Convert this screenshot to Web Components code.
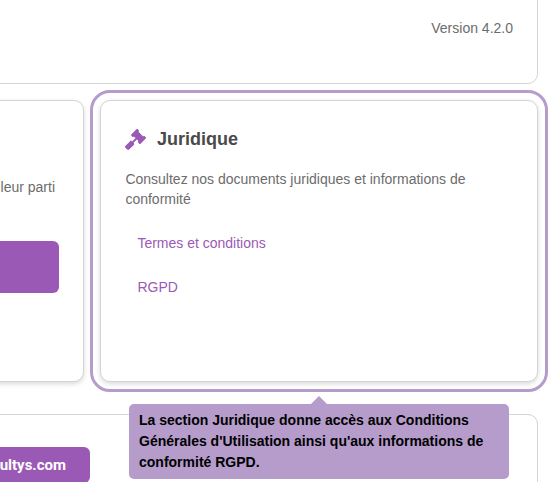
<!DOCTYPE html>
<html lang="fr"><head><meta charset="utf-8"><style>
html,body{margin:0;padding:0;background:#fff;overflow:hidden;width:553px;height:482px}
body{font-family:"Liberation Sans",sans-serif;color:#666}
</style></head><body>
<template id="t-page"><style>
:host{display:flex;flex-direction:column;width:628px;margin-left:-90px;margin-top:-18px}
.row{display:grid;grid-template-columns:174px 438px;gap:16px;margin:16px 0 32px}
</style>
<slot name="top"></slot><div class="row"><slot name="a"></slot><slot name="b"></slot></div><slot name="bottom"></slot></template>

<template id="t-card"><style>
:host{display:block;position:relative;box-sizing:border-box;background:#fff;border:1px solid #d4d4d4;border-radius:10px}
:host([shadow]){box-shadow:0 2px 5px rgba(0,0,0,.15)}
:host([focused]){outline:3px solid #b59ccb;outline-offset:7px}
</style><slot></slot></template>

<template id="t-legal"><style>
:host{display:flex;flex-direction:column;box-sizing:border-box;height:280px;padding:23px 24px 0}
h2{display:flex;align-items:center;gap:11px;margin:0;height:30px;font:700 18px "Liberation Sans",sans-serif;color:#4a4a4a}
svg{width:21px;height:21px;fill:#9b59b6;flex:none}
p{margin:15px 0 0 .4px;font:400 14px/20px "Liberation Sans",sans-serif;color:#6c6c6c}
nav{display:flex;flex-direction:column;margin:12px 0 0 .4px}
</style>
<h2><svg viewBox="0 0 512 512"><path d="M504.971 199.362l-22.627-22.627c-9.373-9.373-24.569-9.373-33.941 0l-5.657 5.657L329.608 69.255l5.657-5.657c9.373-9.373 9.373-24.569 0-33.941L312.638 7.029c-9.373-9.373-24.569-9.373-33.941 0L154.246 131.48c-9.373 9.373-9.373 24.569 0 33.941l22.627 22.627c9.373 9.373 24.569 9.373 33.941 0l5.657-5.657 39.598 39.598-81.04 81.04-5.657-5.657c-12.497-12.497-32.758-12.497-45.255 0L9.373 412.118c-12.497 12.497-12.497 32.758 0 45.255l45.255 45.255c12.497 12.497 32.758 12.497 45.255 0l114.745-114.745c12.497-12.497 12.497-32.758 0-45.255l-5.657-5.657 81.04-81.04 39.598 39.598-5.657 5.657c-9.373 9.373-9.373 24.569 0 33.941l22.627 22.627c9.373 9.373 24.569 9.373 33.941 0l124.451-124.451c9.372-9.372 9.372-24.568 0-33.941z"/></svg><slot name="title"></slot></h2>
<p><slot name="text"></slot></p><nav><slot></slot></nav></template>

<template id="t-link"><style>
:host{display:block;padding:12px;font:400 14px/20px "Liberation Sans",sans-serif;color:#9b59b6}
</style><slot></slot></template>

<template id="t-tip"><style>
:host{position:absolute;display:block;box-sizing:border-box;left:28px;top:303px;width:380px;height:75px;padding:5.8px 10px;background:#b59ccb;border-radius:5px;color:#000;font:700 14px/21.2px "Liberation Sans",sans-serif;z-index:2}
:host::before{content:"";position:absolute;left:182px;top:-8px;border:8px solid transparent;border-top:0;border-bottom-color:#b59ccb}
</style><slot></slot></template>

<template id="t-btn"><style>
:host{display:flex;align-items:center;justify-content:flex-end;box-sizing:border-box;background:#9b59b6;border-radius:6px;color:#fff;font:700 15px Roboto,sans-serif}
</style><slot></slot></template>

<template id="t-top"><style>
:host{display:flex;justify-content:flex-end;box-sizing:border-box;height:100px;padding:37px 24px 0;font:400 14px/16px "Liberation Sans",sans-serif;color:#6c6c6c}
</style><slot></slot></template>

<template id="t-partial"><style>
:host{display:flex;flex-direction:column;box-sizing:border-box;height:280px;align-items:flex-end;padding:76px 24px 0 0}
.t{font:400 14px/20px "Liberation Sans",sans-serif;color:#6c6c6c;margin-right:4px}
::slotted(x-btn){width:150px;height:52px;margin-top:44px}
</style><div class="t"><slot name="text"></slot></div><slot></slot></template>

<template id="t-foot"><style>
:host{display:block;box-sizing:border-box;height:120px;padding:32px 0 0 20px}
::slotted(x-btn){width:159px;height:36px;padding-right:24px}
</style><slot></slot></template>

<x-page>
 <x-card slot="top"><x-top>Version 4.2.0</x-top></x-card>
 <x-card slot="a" shadow><x-partial><span slot="text">leur parti</span><x-btn></x-btn></x-partial></x-card>
 <x-card slot="b" shadow focused>
  <x-legal><span slot="title">Juridique</span><span slot="text">Consultez nos documents juridiques et informations de conformité</span><x-link>Termes et conditions</x-link><x-link>RGPD</x-link></x-legal>
  <x-tip>La section Juridique donne accès aux Conditions Générales d'Utilisation ainsi qu'aux informations de conformité RGPD.</x-tip>
 </x-card>
 <x-card slot="bottom"><x-foot><x-btn>ultys.com</x-btn></x-foot></x-card>
</x-page>
<script>
for(const [n,t] of [['x-page','t-page'],['x-card','t-card'],['x-legal','t-legal'],['x-link','t-link'],['x-tip','t-tip'],['x-btn','t-btn'],['x-top','t-top'],['x-partial','t-partial'],['x-foot','t-foot']]){
 customElements.define(n,class extends HTMLElement{constructor(){super();this.attachShadow({mode:'open'}).appendChild(document.getElementById(t).content.cloneNode(true))}});
}
</script></body></html>
